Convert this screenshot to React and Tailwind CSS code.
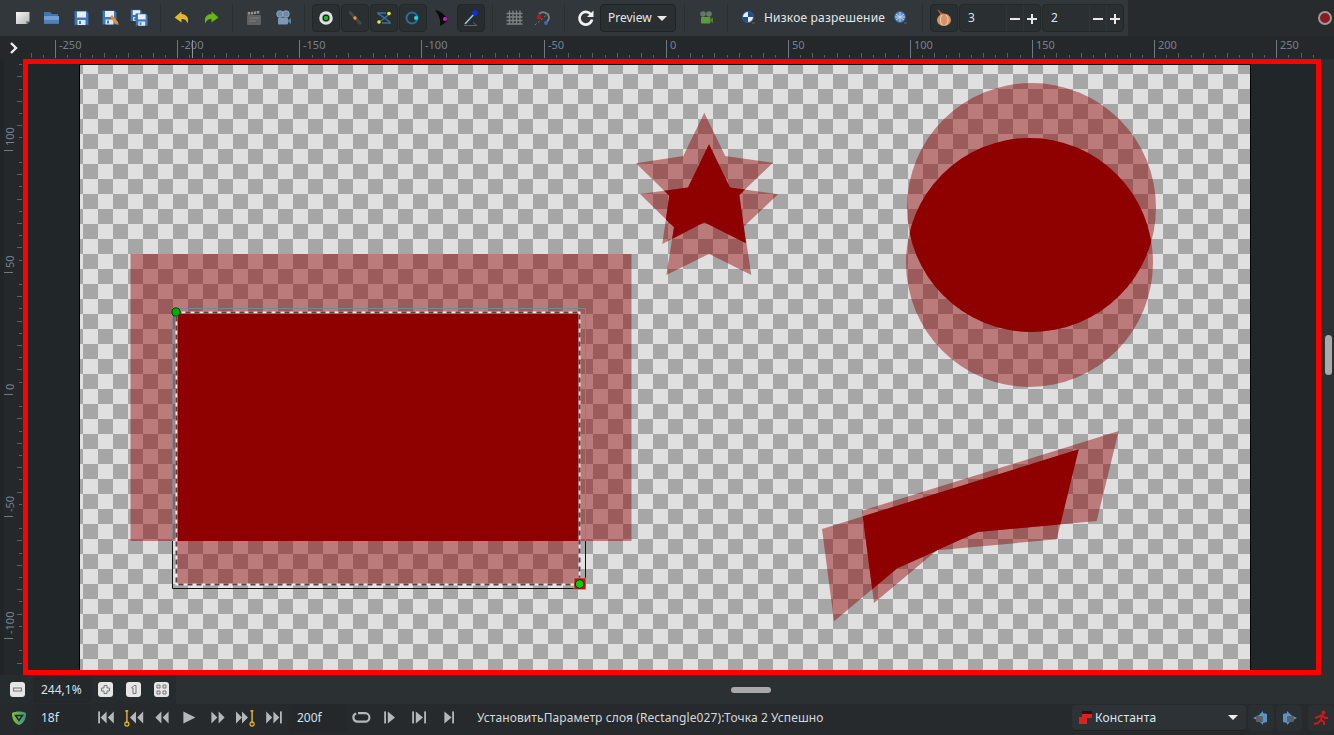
import React from 'react';

const FONT = 'font-["Noto_Sans",sans-serif]';

// --- rulers ---
function HRuler() {
  const zero = 665.6;
  const step = 12.21;
  const ticks = [];
  for (let i = -52; i <= 53; i++) ticks.push(i);
  return (
    <svg width="1311" height="23" viewBox="23 36 1311 23" className="block">
      {ticks.map((i) => {
        const x = Math.round(zero + i * step) + 0.5;
        const major = i % 10 === 0;
        const y1 = major ? 40 : i % 2 === 0 ? 53 : 55;
        return <line key={i} x1={x} x2={x} y1={y1} y2={major ? 58 : 57.5} stroke={major ? '#6f7a80' : '#596268'} />;
      })}
      {ticks.filter((i) => i % 10 === 0).map((i) => (
        <text key={i} x={Math.round(zero + i * step) + 4} y="49" fontSize="11" fill="#74828c" fontFamily="Noto Sans">{i * 5}</text>
      ))}
      <line x1="192.5" x2="192.5" y1="40" y2="58" stroke="#8b949a" />
    </svg>
  );
}

function VRuler() {
  const zero = 393.9;
  const step = 12.21;
  const ticks = [];
  for (let i = -23; i <= 27; i++) ticks.push(i);
  return (
    <svg width="23" height="616" viewBox="0 59 23 616" className="block shrink-0">
      <rect x="0" y="59" width="4" height="616" fill="#212528" />
      {ticks.map((i) => {
        const y = Math.round(zero - i * step) + 0.5;
        const major = i % 10 === 0;
        const x1 = major ? 4 : i % 2 === 0 ? 17 : 19;
        return <line key={i} x1={x1} x2={major ? 13 : 22} y1={y} y2={y} stroke={major ? '#6f7a80' : '#596268'} />;
      })}
      {ticks.filter((i) => i % 10 === 0).map((i) => {
        const y = Math.round(zero - i * step) - 4;
        return (
          <text key={i} x="13.500" y={y} fontSize="11" fill="#74828c" fontFamily="Noto Sans" transform={`rotate(-90 13.500 ${y})`}>{i * 5}</text>
        );
      })}
    </svg>
  );
}

// --- canvas shapes ---
const RED = '#8f0000';

function Overlap({ id, first, second }) {
  return (
    <>
      <clipPath id={id}>{second}</clipPath>
      <g fill={RED} fillOpacity="0.45">{first}{second}</g>
      <g fill={RED} clipPath={`url(#${id})`}>{first}</g>
    </>
  );
}

function Shapes() {
  return (
    <svg width="1288" height="606" viewBox="28 64 1288 606" className="absolute inset-0">
      <Overlap id="rects" first={<rect x="130.500" y="254" width="501" height="287" />} second={<rect x="176" y="312" width="404" height="273" />} />
      <Overlap
        id="stars"
        first={<polygon points="704.3,112.7 725.3,156 773,162.7 739.3,195 746,243.3 704.3,222.3 662.3,244 669.3,195.7 636,163.3 683.3,156" />}
        second={<polygon points="709,144.3 730,187.6 778,194.3 744,226.6 751.3,275 709,253.9 666.3,275 674,227.3 640,194 688,187.6" />}
      />
      <Overlap
        id="circles"
        first={<circle cx="1031.5" cy="207.5" r="124.5" />}
        second={<ellipse cx="1029.5" cy="262.5" rx="123.5" ry="124.5" />}
      />
      <Overlap
        id="blades"
        first={<polygon points="862,510.7 1118.7,431 1096.7,521 977.7,532 937.3,550 874,603" />}
        second={<polygon points="822,529 1078.7,449.3 1056.7,539.3 937.7,550.3 897.3,568.3 834,621.3" />}
      />
      {/* bounding box of the selected layer */}
      <path d="M172.5 541V308.5H585.5V541" fill="none" stroke="#6f8c90" />
      <path d="M172.5 541V588.5H585.5V541" fill="none" stroke="#101010" />
      <rect x="176.5" y="312.5" width="403" height="272" fill="none" stroke="#f0eaea" strokeWidth="2" />
      <rect x="176.5" y="312.5" width="403" height="272" fill="none" stroke="#5e4040" strokeWidth="2" strokeDasharray="5 4" />
      <rect x="574" y="578" width="11.500" height="11.500" fill="#f00000" stroke="#49d0d0" strokeWidth="0.6" />
      <circle cx="176" cy="312" r="4.100" fill="#00b000" stroke="#063806" strokeWidth="1" />
      <circle cx="579.7" cy="584" r="4.300" fill="#00d000" stroke="#053005" strokeWidth="1" />
    </svg>
  );
}

// --- toolbar icons ---
const Floppy = ({ x = 0, y = 0, s = 1 }) => (
  <g transform={`translate(${x} ${y}) scale(${s})`}>
    <path d="M1 1h12l2 2v12H1z" fill="#3f78b8" stroke="#25507f" strokeWidth="0.6" />
    <rect x="3.5" y="1.5" width="9" height="6" fill="#e8eef4" />
    <rect x="4" y="10" width="8" height="5" fill="#dfe6ec" />
    <rect x="5.5" y="11" width="2" height="3" fill="#3f78b8" />
  </g>
);

const icons = {
  doc: (
    <>
      <defs>
        <linearGradient id="docg" x1="0" y1="0" x2="1" y2="1"><stop offset="0" stopColor="#f6f6f6" /><stop offset="1" stopColor="#b4b4b4" /></linearGradient>
      </defs>
      <path d="M2 3h13.500v9.500L13 15H2z" fill="url(#docg)" />
      <path d="M12.500 15l3-2.500h-3z" fill="#56595b" />
    </>
  ),
  open: (
    <>
      <path d="M1 3h6l2 2h6v4H1z" fill="#3f74ad" />
      <path d="M1 7h15v7.500H1z" fill="#6f9fd2" />
      <path d="M1 11h15v3.500H1z" fill="#4a82bd" />
    </>
  ),
  save: <Floppy x={1.500} y={1} />,
  saveAs: (
    <>
      <Floppy x={0.500} y={0.500} />
      <path d="M9 8l2-2 6 7 .5 3-3-1z" fill="#e88b2d" />
    </>
  ),
  saveAll: (
    <>
      <Floppy x={0} y={0} s={0.8} />
      <Floppy x={5} y={4} s={0.85} />
    </>
  ),
  undo: <path d="M8 2L1 8l7 5V9.500c3 0 5 1 6 4.500 2-6-1-9-6-9.500z" fill="#e3b72c" transform="translate(0.500 0.500)" />,
  redo: <path d="M10 2l7 6-7 5V9.500c-3 0-5 1-6 4.500-2-6 1-9 6-9.500z" fill="#69b515" transform="translate(-0.500 0.500)" />,
  clap: (
    <>
      <rect x="2" y="6" width="14" height="10" rx="1" fill="#5f6264" />
      <path d="M2 3l13-1.500.6 3L2 6z" fill="#4f5153" />
      <path d="M4 3v2.500M7 3v2.500M10 2.500v2.500M13 2v2.500" stroke="#b4b4b4" strokeWidth="1.300" />
      <path d="M4 9h10M4 12h7" stroke="#7b7e80" />
    </>
  ),
  camera: (
    <>
      <circle cx="6" cy="5" r="3.300" fill="#6b8aa8" stroke="#9fb8d0" strokeWidth="0.700" />
      <circle cx="12" cy="5" r="3.300" fill="#6b8aa8" stroke="#9fb8d0" strokeWidth="0.700" />
      <rect x="4" y="8.500" width="10" height="7" rx="1" fill="#7d99b6" />
      <path d="M14 11l3-2v6l-3-2z" fill="#5f7d9c" />
    </>
  ),
  eye: (
    <>
      <circle cx="9" cy="9" r="6.800" fill="#e2e2e2" />
      <circle cx="9" cy="9" r="4.300" fill="#9a9a9a" />
      <circle cx="9" cy="9" r="3.200" fill="#141414" />
      <circle cx="9" cy="9" r="2.300" fill="#10c020" />
    </>
  ),
  link: (
    <>
      <path d="M3 3c3 1 4 4 6 6s4 4 6 6" fill="none" stroke="#45474a" strokeWidth="3" />
      <circle cx="9" cy="9" r="1.700" fill="#f0a010" />
    </>
  ),
  curves: (
    <>
      <path d="M2 4h9M7 14h9M3 5c4 1 8 6 12 8M3 13c4-1 8-6 12-8" fill="none" stroke="#3a7299" strokeWidth="1.400" />
      <circle cx="14" cy="4.500" r="1.800" fill="#eeee20" />
      <circle cx="4" cy="13" r="1.800" fill="#eeee20" />
    </>
  ),
  ring: (
    <>
      <circle cx="8" cy="9" r="5.500" fill="none" stroke="#286f9c" strokeWidth="2" />
      <circle cx="12" cy="9" r="2" fill="#10e0f0" />
    </>
  ),
  feather: (
    <>
      <path d="M2 1c6 1 10 5 13 10-3 3-6 5-8 6C8 11 6 6 2 1z" fill="#0a0a0a" />
      <circle cx="12" cy="10" r="2" fill="#e010e0" />
    </>
  ),
  pin: (
    <>
      <path d="M3 15L13 4" stroke="#8fc8dc" strokeWidth="1.600" />
      <circle cx="13" cy="4" r="2.800" fill="#1030e0" />
      <path d="M2 16.500h13l-4-3" fill="none" stroke="#5c6468" />
    </>
  ),
  grid: <path d="M5 2v14M8.500 2v14M12 2v14M15.500 2v14M2 5h16M2 8.500h16M2 12h16M2 15.500h16" stroke="#7d8284" strokeWidth="1.300" transform="translate(-.5 -.5)" />,
  snap: (
    <>
      <path d="M5 5a6 6 0 0 1 10 3c0 3-2 5-4 6" fill="none" stroke="#777c7f" strokeWidth="2" />
      <path d="M1 16L16 3" stroke="#777c7f" strokeDasharray="2 2" />
      <circle cx="5" cy="8" r="2.300" fill="#c01818" />
      <circle cx="12" cy="14" r="2" fill="#2a6fc0" />
    </>
  ),
  refresh: (
    <>
      <path d="M14.500 6.500a6.300 6.300 0 1 0 .5 4" fill="none" stroke="#f2f2f2" strokeWidth="2.600" />
      <path d="M16.500 1.500v6.500H10z" fill="#f2f2f2" />
    </>
  ),
  previewCam: (
    <>
      <circle cx="6" cy="5" r="2.800" fill="#66786c" />
      <circle cx="12" cy="5" r="2.800" fill="#66786c" />
      <rect x="4" y="8" width="9.500" height="6.500" rx="1" fill="#5a9c3a" />
      <path d="M13.500 10.500l2.500-2v5.500l-2.500-2z" fill="#4d8831" />
    </>
  ),
  lowRes: (
    <>
      <circle cx="8" cy="8" r="5.500" fill="#e8eef4" stroke="#2a5f96" />
      <path d="M8 2.500a5.500 5.500 0 0 1 5.500 5.500H8zM8 8H2.500A5.500 5.500 0 0 0 8 13.500z" fill="#1f4f86" />
      <path d="M12 14h3" stroke="#666" />
    </>
  ),
  highRes: (
    <>
      <circle cx="8" cy="8" r="5.500" fill="#5f8cc0" stroke="#2a5f96" />
      <path d="M4 5l8 6M12 5l-8 6M3 8h10M8 3v10" stroke="#c8d8e8" strokeWidth="0.900" />
      <path d="M12 14h3" stroke="#666" />
    </>
  ),
  onion: (
    <>
      <path d="M3 1l4.500 3.500C12 4 16 7 16 11c0 3.500-3.500 6-7 6s-7-2.500-7-6c0-2.500 2-4.500 3.500-5.500z" fill="#d6926a" />
      <path d="M7 6c-2 3-2 7 0 10M11 6c2.500 3 2.500 7 0 10" fill="none" stroke="#f3d6bd" />
      <path d="M3 1l3.500 4" stroke="#a05a28" strokeWidth="1.400" />
    </>
  ),
};

const Ico = ({ name, size = 18 }) => (
  <svg width={size} height={size} viewBox="0 0 18 18" className="block">{icons[name]}</svg>
);

const Slot = ({ name }) => (
  <div className="flex h-full w-[29px] shrink-0 items-center justify-center"><Ico name={name} /></div>
);

const Sep = () => (
  <div className="flex h-full w-[14px] shrink-0 justify-center py-1"><div className="w-px bg-[#2a2f32]" /></div>
);

const Btn = ({ name, on }) => (
  <div className="flex h-full w-[29px] shrink-0 items-center justify-center">
    <div className={`flex h-7 w-7 items-center justify-center rounded border border-[#23272a] ${on ? 'bg-[#272c2f]' : 'bg-[#2a2f32]'}`}>
      <Ico name={name} />
    </div>
  </div>
);

const Spin = ({ value }) => (
  <div className="flex h-7 w-[82px] items-center rounded border border-[#23272a] bg-[#2a2f32] text-[12px] text-[#d6e4f0]">
    <span className="flex-1 pl-2">{value}</span>
    <span className="relative h-full w-[17px] border-l border-[#2f3538]">
      <span className="absolute left-[3px] top-[13px] h-[2px] w-[10px] bg-[#e8e8e8]" />
    </span>
    <span className="relative h-full w-[17px] border-l border-[#2f3538]">
      <span className="absolute left-[3px] top-[13px] h-[2px] w-[10px] bg-[#e8e8e8]" />
      <span className="absolute left-[7px] top-[9px] h-[10px] w-[2px] bg-[#e8e8e8]" />
    </span>
  </div>
);

function Toolbar() {
  return (
    <div className="flex h-9 items-stretch bg-[#272b2e]">
      <div className="flex h-9 w-[1128px] items-center bg-[#31373a] pl-2">
        <Slot name="doc" /><Slot name="open" /><Slot name="save" /><Slot name="saveAs" /><Slot name="saveAll" />
        <Sep />
        <Slot name="undo" /><Slot name="redo" />
        <Sep />
        <Slot name="clap" /><Slot name="camera" />
        <Sep />
        <Btn name="eye" /><Btn name="link" /><Btn name="curves" /><Btn name="ring" />
        <Slot name="feather" />
        <Btn name="pin" on />
        <Sep />
        <Slot name="grid" /><Slot name="snap" />
        <Sep />
        <Slot name="refresh" />
        <div className="flex h-7 w-[76px] shrink-0 items-center gap-[5px] rounded border border-[#1f2326] bg-[#2a2f32] pl-[7px] text-[12px] text-[#e4e8ea]">
          Preview
          <span className="h-0 w-0 border-x-[5px] border-t-[5px] border-x-transparent border-t-[#e8e8e8]" />
        </div>
        <div className="w-px" />
        <Sep />
        <Slot name="previewCam" />
        <Sep />
        <Slot name="lowRes" />
        <span className="ml-[1px] w-[122px] whitespace-nowrap text-[12px] tracking-[0.2px] text-[#e4e8ea]">Низкое разрешение</span>
        <Slot name="highRes" />
        <Sep />
        <div className="mr-[1px] ml-[1px] flex h-7 w-7 items-center justify-center rounded border border-[#23272a] bg-[#2a2f32]"><Ico name="onion" /></div>
        <Spin value="3" />
        <div className="w-px" />
        <Spin value="2" />
      </div>
      <div className="flex-1" />
      <div className="flex items-center pr-[2px]">
        <span className="h-[14px] w-[14px] rounded-full border-2 border-[#9a9a9a] bg-[#8c1c1c]" />
      </div>
    </div>
  );
}

// --- bottom icons ---
const WhiteBtn = ({ children }) => (
  <div className="flex h-[15px] w-[15px] items-center justify-center rounded-[3px] bg-[#e6e6e6]">
    <svg width="11" height="11" viewBox="0 0 11 11">{children}</svg>
  </div>
);

const Box = ({ children }) => (
  <div className="flex h-7 w-[58px] shrink-0 items-center rounded bg-[#24282b] pl-2 text-[12px] text-[#cfe2f2]">{children}</div>
);

const Key = ({ x }) => (
  <g transform={`translate(${x} 0)`} fill="#e0b52c">
    <rect x="1" y="1" width="2.500" height="1.200" />
    <rect x="1.800" y="1" width="1.200" height="11" />
    <circle cx="2.400" cy="12.500" r="1.700" fill="none" stroke="#e0b52c" />
  </g>
);

const G = '#b4b8ba';
const transport = [
  { w: 15, d: <><rect x="1" y="2" width="1.500" height="10" fill={G} /><path d="M8 2v10L3 7zM14 2v10L9 7z" fill={G} /></> },
  { w: 16, d: <><Key x={0} /><path d="M10 2v10L5 7zM16 2v10l-5-5z" fill={G} /></> },
  { w: 15, d: <path d="M7 2v10L2 7zM13 2v10L8 7z" fill={G} /> },
  { w: 15, d: <path d="M2 2v10l10-5z" fill={G} /> },
  { w: 15, d: <path d="M2 2v10l5-5zM8 2v10l5-5z" fill={G} /> },
  { w: 16, d: <><path d="M0 2v10l5-5zM5 2v10l5-5z" fill={G} /><Key x={11} /></> },
  { w: 15, d: <><path d="M1 2v10l5-5zM7 2v10l5-5z" fill={G} /><rect x="12.500" y="2" width="1.500" height="10" fill={G} /></> },
];

const Tr = ({ w, children, cls = 'w-[28px]' }) => (
  <div className={`flex shrink-0 items-center justify-center ${cls}`}>
    <svg width={w * 1.2} height="18" viewBox={`0 0 ${w} 15`}>{children}</svg>
  </div>
);

function ZoomRow() {
  return (
    <div className="flex h-[29px] items-center bg-[#2b3033]">
      <div className="flex h-full w-[176px] items-center bg-[#262b2e] pl-[10px]">
        <WhiteBtn><rect x="1.500" y="4" width="8" height="3" fill="none" stroke="#777" /></WhiteBtn>
        <div className="ml-2 flex h-[26px] w-[58px] items-center rounded bg-[#24282b] pl-2 text-[12px] text-[#cfe2f2]">244,1%</div>
        <div className="ml-[7px]"><WhiteBtn><path d="M4 1.500h3V4h2.500v3H7v2.500H4V7H1.500V4H4z" fill="none" stroke="#777" /></WhiteBtn></div>
        <div className="ml-[13px]"><WhiteBtn><path d="M3.500 4L6 1.500h2v8H5V4z" fill="none" stroke="#777" /></WhiteBtn></div>
        <div className="ml-[13px]"><WhiteBtn><path d="M1 1h3v3H1zM7 1h3v3H7zM1 7h3v3H1zM7 7h3v3H7z" fill="none" stroke="#777" /></WhiteBtn></div>
      </div>
      <div className="relative flex-1 self-stretch">
        <span className="absolute left-[555px] top-[12px] h-[6px] w-10 rounded-full bg-[#a9a9a9]" />
      </div>
    </div>
  );
}

function StatusRow() {
  return (
    <div className="flex h-[31px] items-center bg-[#262a2d] pb-[3px] pl-[11px]">
      <svg width="16" height="16" viewBox="0 0 16 16" className="shrink-0">
        <defs>
          <linearGradient id="shield" x1="0" y1="0" x2="1" y2="0"><stop offset="0" stopColor="#7bc23a" /><stop offset="1" stopColor="#3f8f8a" /></linearGradient>
        </defs>
        <path d="M1 3c4-2 10-2 14 0 0 6-2 10-7 12C3 13 1 9 1 3z" fill="url(#shield)" />
        <path d="M4.500 5.500h7L8 10.500z" fill="none" stroke="#23272a" strokeWidth="1.500" />
      </svg>
      <div className="ml-[6px]"><Box>18f</Box></div>
      <div className="ml-[1px] flex w-[197px] shrink-0 items-center">
        {transport.map((t, i) => <Tr key={i} w={t.w}>{t.d}</Tr>)}
      </div>
      <Box>200f</Box>
      <Tr w={16} cls="w-[29px]"><path d="M5 3.500h6a3.500 3.500 0 0 1 0 7H4.500a3.500 3.500 0 0 1-1-6.800" fill="none" stroke={G} strokeWidth="1.800" /></Tr>
      <Tr w={13} cls="w-[29px]"><><rect x="1" y="2" width="1.500" height="10" fill={G} /><path d="M4 2v10l6-5z" fill={G} /></></Tr>
      <Tr w={15} cls="w-[30px]"><><rect x="1" y="2" width="1.500" height="10" fill={G} /><path d="M4 2v10l6-5z" fill={G} /><rect x="11" y="2" width="1.500" height="10" fill={G} /></></Tr>
      <Tr w={12} cls="w-[28px]"><><path d="M2 2v10l6-5z" fill={G} /><rect x="8.500" y="2" width="1.500" height="10" fill={G} /></></Tr>
      <span className="ml-[14px] w-[595px] shrink-0 whitespace-nowrap text-[12px] tracking-[0.1px] text-[#d4d9dc]">УстановитьПараметр слоя (Rectangle027):Точка 2 Успешно</span>
      <div className="flex h-[26px] w-[174px] shrink-0 items-center rounded border-b border-[#1d2124] bg-[#2d3236] pl-[7px] text-[12px] text-[#dfe6ea]">
        <svg width="13" height="13" viewBox="0 0 13 13" className="shrink-0">
          <path d="M0 13V6h3V0h10v7H8v6z" fill="#e02020" />
          <path d="M3 0h10v3H3z" fill="#2a1010" />
        </svg>
        <span className="ml-[3px] flex-1 tracking-[0.2px]">Константа</span>
        <span className="mr-2 h-0 w-0 border-x-[5px] border-t-[5px] border-x-transparent border-t-[#eeeeee]" />
      </div>
      <div className="ml-[2px] flex h-[26px] w-[26px] items-center justify-center rounded bg-[#2a2f32]">
        <svg width="18" height="16" viewBox="0 0 18 16"><path d="M1 8l6-3 4-4v14l-4-4zM11 3l4 1v8l-4 1z" fill="#5a93cc" /><rect x="4" y="6" width="7" height="6" rx="1" fill="#5d6163" /></svg>
      </div>
      <div className="ml-[2px] flex h-[26px] w-[26px] items-center justify-center rounded bg-[#2a2f32]">
        <svg width="18" height="16" viewBox="0 0 18 16"><path d="M17 8l-6-3-4-4v14l4-4zM7 3L3 4v8l4 1z" fill="#5a93cc" /><rect x="7" y="6" width="7" height="6" rx="1" fill="#5d6163" /></svg>
      </div>
      <div className="ml-[6px] flex h-[26px] w-[26px] shrink-0 items-center justify-center rounded bg-[#2a2f32]">
        <svg width="16" height="16" viewBox="0 0 16 16">
          <circle cx="10.500" cy="2.500" r="2" fill="#d01818" />
          <path d="M9 5L5 7l-3 1M9 5l3 3 3 0M9 5L8 10l3 2 0 3M8 10l-3 3-4 1" fill="none" stroke="#d01818" strokeWidth="2" />
        </svg>
      </div>
    </div>
  );
}

export default function App() {
  return (
    <div className={`flex h-[735px] w-[1334px] flex-col overflow-hidden bg-[#24282b] ${FONT}`}>
      <Toolbar />
      <div className="flex h-[23px]">
        <div className="flex w-[23px] items-center justify-end pr-[4px]">
          <svg width="10" height="12" viewBox="0 0 10 12"><path d="M2 1l5 5-5 5" fill="none" stroke="#ececec" strokeWidth="2.400" /></svg>
        </div>
        <HRuler />
      </div>
      <div className="flex h-[616px]">
        <VRuler />
        <div className="relative w-[1298px] border-[5px] border-[#ff0000] bg-[#212629]">
          <div className="ml-[51px] h-full w-[1172px] border-x border-t border-black bg-[conic-gradient(#a6a6a6_25%,#e0e0e0_0_50%,#a6a6a6_0_75%,#e0e0e0_0)] bg-[length:30px_30px] bg-[position:3px_-6px]" />
          <Shapes />
        </div>
        <div className="relative flex-1 bg-[#2b3033]">
          <span className="absolute left-[4px] top-[276px] h-10 w-[7px] rounded-full bg-[#a9a9a9]" />
        </div>
      </div>
      <ZoomRow />
      <StatusRow />
    </div>
  );
}
